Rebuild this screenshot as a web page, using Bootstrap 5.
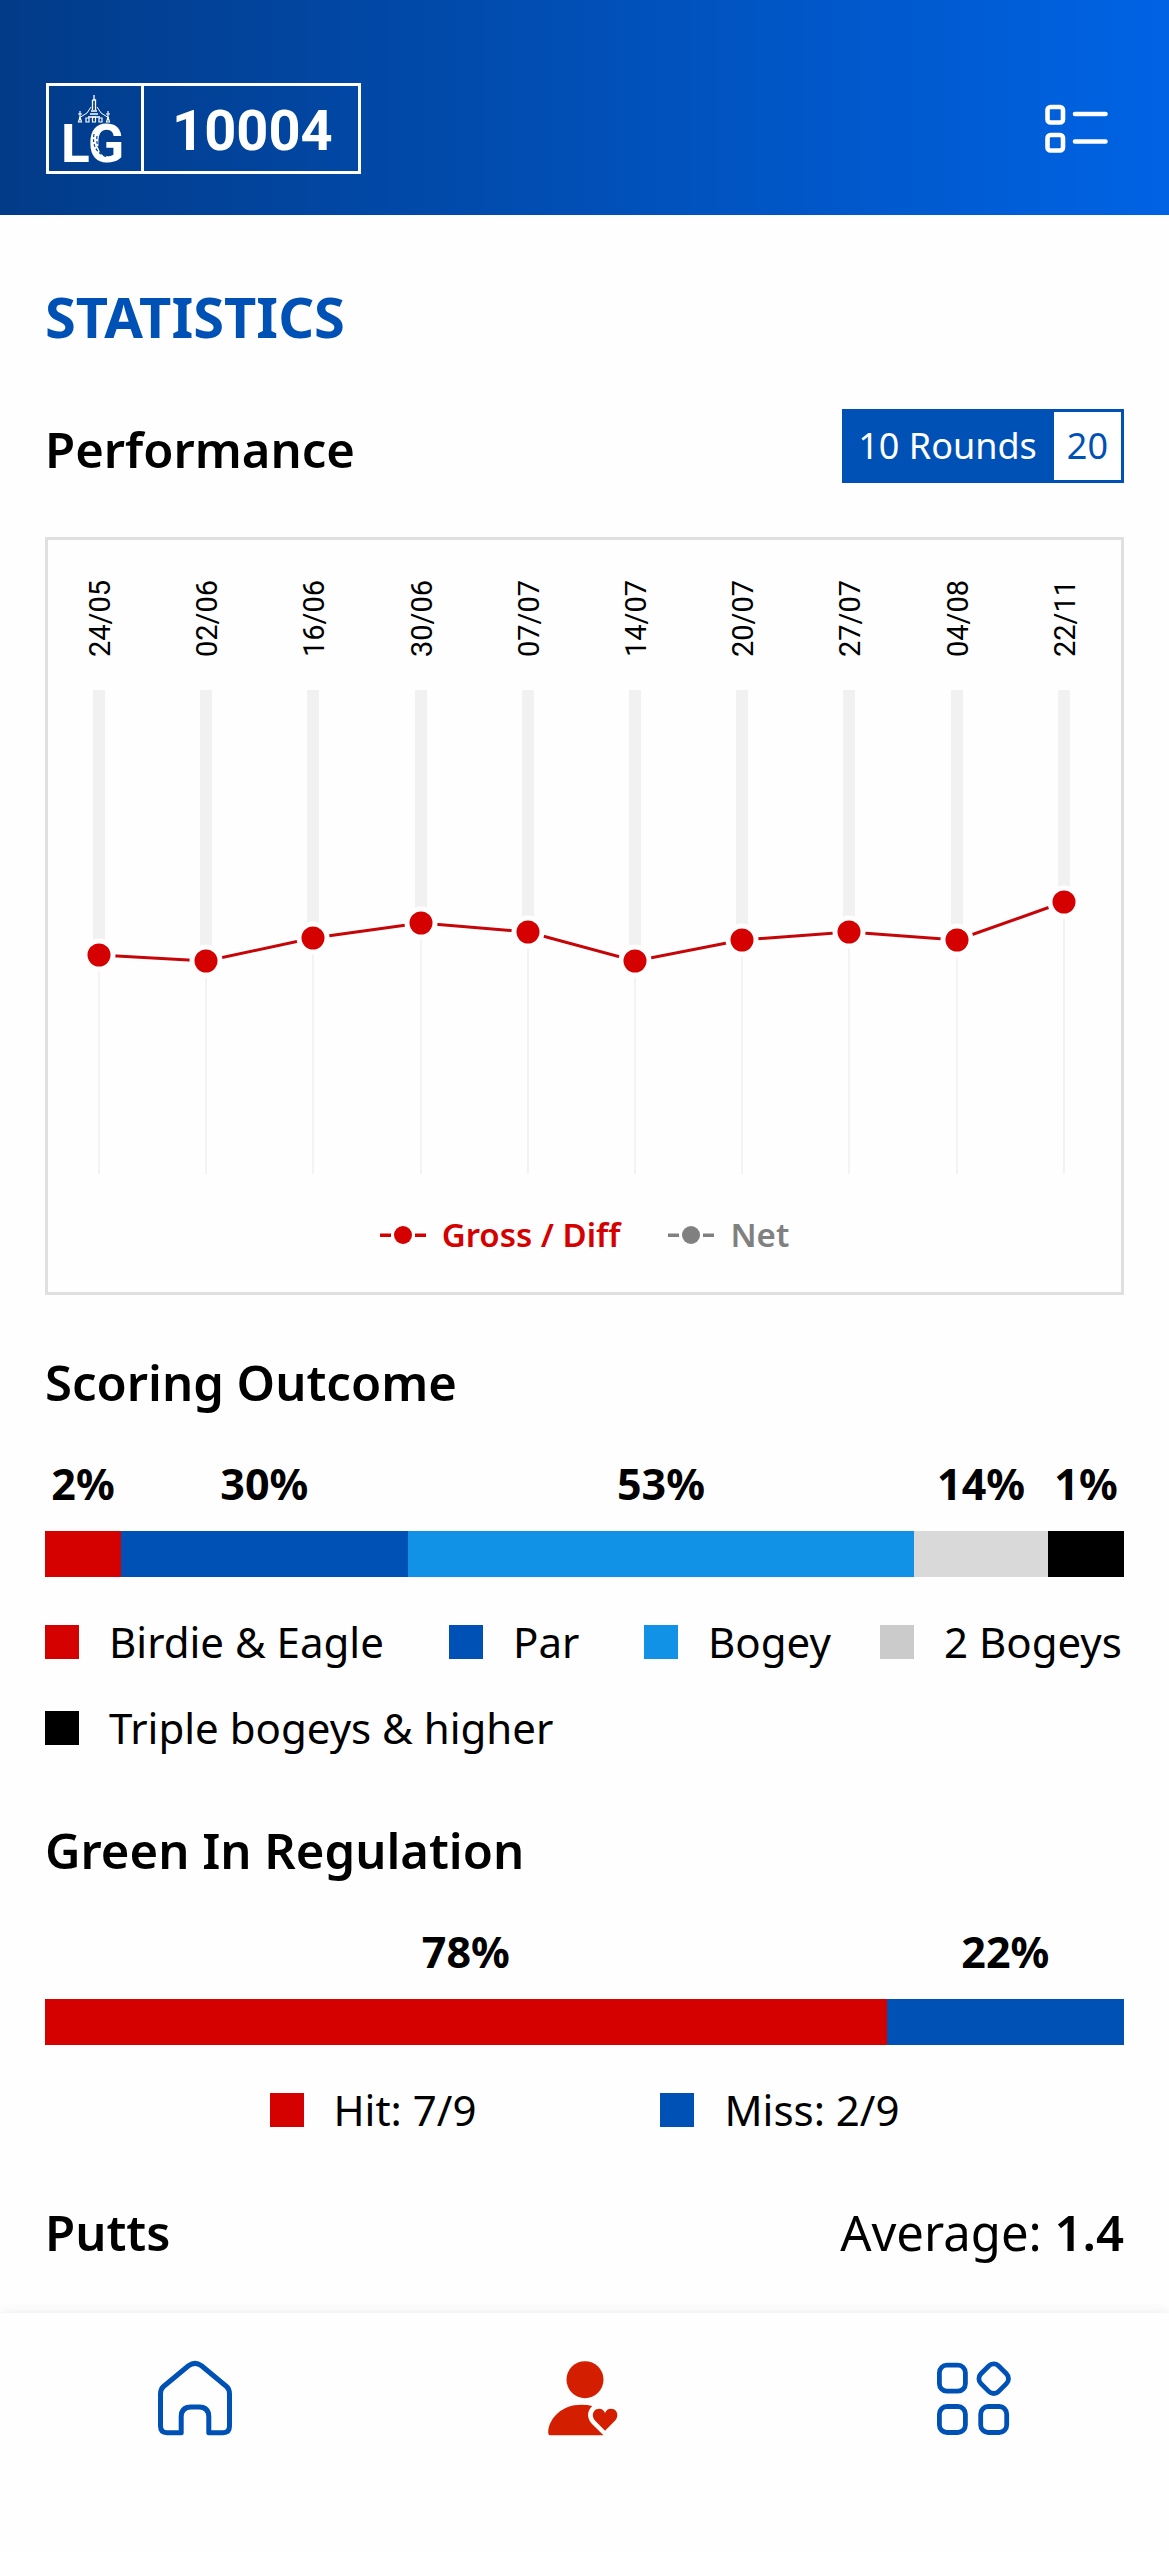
<!DOCTYPE html>
<html lang="en">
<head>
<meta charset="utf-8">
<meta name="viewport" content="width=device-width, initial-scale=1">
<title>Statistics</title>
<link rel="stylesheet" href="https://cdn.jsdelivr.net/npm/bootstrap@5.3.0/dist/css/bootstrap.min.css">
<style>
  :root { --blue: #0051b6; --red: #d50000; --sky: #1192e7; --silver: #d9d9d9; }
  body { font-family: "Noto Sans", "Open Sans", sans-serif; font-size: 42px; line-height: 64px; color: #000; background: #fefefe; padding-bottom: 240px; }
  .topbar { background: linear-gradient(90deg, #023b88 0%, #0063e4 100%); padding: 83px 45px 41px; }
  .club { border: 3px solid #fff; color: #fff; text-decoration: none; height: 91px; margin-left: 1px; }
  .club-logo { width: 95px; border-right: 3px solid #fff; }
  .club-logo svg { overflow: visible; }
  .club-code { font: 700 56px/64px Roboto, sans-serif; padding: 4px 25px 0 28px; }
  .list-btn { margin-right: 14px; }
  .content { padding: 69px 45px 48px; }
  .page-title { font-size: 56px; line-height: 64px; font-weight: 700; color: var(--blue); margin-bottom: 61px; }
  .sec-title, .average { font-size: 49px; line-height: 68px; }
  .sec-title, .fw-600 { font-weight: 600; }
  .rounds { border: 3px solid var(--blue); margin-bottom: 54px; }
  .perf-row .sec-title { margin-bottom: 54px; }
  .rounds .btn { font-size: 36px; line-height: 68px; border: 0; border-radius: 0; padding: 0 13px; color: var(--blue); background: #fff; }
  .rounds .btn.active { color: #fff; background: var(--blue); padding-right: 17px; }
  .chart-box { border: 3px solid #e0e0e0; padding-bottom: 35px; margin-bottom: 53px; }
  .chart-box text { font: 400 29px Roboto, sans-serif; }
  .chart-key { font-size: 33px; line-height: 44px; font-weight: 600; gap: 48px; margin-top: 33px; }
  .chart-key div { gap: 16px; }
  .key-red { color: var(--red); }
  .key-grey { color: #808080; }
  .outcome { margin-top: 36px; margin-bottom: 33px; }
  .outcome > div { flex: 1 1 0; min-width: 76px; text-align: center; font-weight: 700; font-size: 43px; }
  .outcome > div::after { content: ""; display: block; height: 46px; margin-top: 15px; background: var(--tone); }
  .legend-item { gap: 30px; white-space: nowrap; }
  .legend-item::before { content: ""; width: 34px; height: 34px; background: var(--tone); flex: none; }
  .t-red { --tone: var(--red); } .t-blue { --tone: var(--blue); } .t-sky { --tone: var(--sky); }
  .t-silver { --tone: var(--silver); } .t-grey { --tone: #cbcbcb; } .t-black { --tone: #000; }
  .score-key { display: grid; grid-template-columns: 404fr 195fr 236fr 244fr; row-gap: 22px; margin-bottom: 56px; }
  .score-key .wide { grid-column: 1 / -1; }
  .green-key { gap: 184px; margin-bottom: 56px; }
  .tabbar { background: #fefefe; height: 239px; padding-top: 45px; box-shadow: 0 0 12px rgba(0,0,0,.08); }
  svg { display: block; }
</style>
</head>
<body>
<header class="topbar d-flex justify-content-between align-items-center">
  <a href="#" class="club d-flex align-items-stretch">
    <span class="club-logo d-flex align-items-center justify-content-center">
      <svg width="76" height="85" viewBox="-5 -5 76 85" fill="none" stroke="#fff" aria-label="LG club logo">
        <path d="M32 4v5M30.500 9h3v10M30.500 9v10M29 20h6M28 23h8M26 26h12" stroke-width="1.300"/>
        <path d="M29 16L25 22L17 27M35 16L39 22L47 27" stroke-width="1"/>
        <path d="M18 20v6M46 20v6M16 23h4M44 23h4M16.500 31l1.500-5l1.500 5zM44.500 31l1.500-5l1.500 5zM24 27v4h3v-4zM30.500 26v5h3v-5zM37 27v4h3v-4z" stroke-width="1.200"/>
        <text x="-1" y="71" font-family="Roboto" font-weight="700" font-size="53" fill="#fff" stroke="none">LG</text>
        <path d="M32 43q-3 17 13 23M35 45q-2 14 12 20" stroke="#03408f" stroke-width="1.200" stroke-dasharray="3 2"/>
      </svg>
    </span>
    <span class="club-code d-flex align-items-center">10004</span>
  </a>
  <button type="button" class="btn border-0 p-0 list-btn" aria-label="Menu">
    <svg width="66" height="50" viewBox="0 0 66 50" fill="none" stroke="#fff" stroke-width="4.600" stroke-linecap="round">
      <rect x="3.500" y="3" width="15.500" height="15.500" rx="3"/>
      <rect x="3.500" y="31" width="15.500" height="15.500" rx="3"/>
      <path d="M31 10h30.500M31 37.500h30.500"/>
    </svg>
  </button>
</header>

<main class="content">
  <h1 class="page-title">STATISTICS</h1>

  <div class="perf-row d-flex justify-content-between align-items-end">
    <h2 class="sec-title">Performance</h2>
    <div class="rounds d-flex" role="group" aria-label="Number of rounds">
      <button type="button" class="btn active">10 Rounds</button>
      <button type="button" class="btn">20</button>
    </div>
  </div>

  <section class="chart-box">
    <svg id="chart" class="w-100 h-auto" viewBox="0 0 1073 640" role="img" aria-label="Score per round"></svg>
    <div class="chart-key d-flex justify-content-center">
      <div class="key-red d-flex align-items-center">
        <svg width="46" height="18" viewBox="0 0 46 18" fill="currentColor"><circle cx="23" cy="9" r="9"/><path d="M0 7.500h11v3.500H0zM35 7.500h11v3.500H35z"/></svg>
        <span>Gross / Diff</span>
      </div>
      <div class="key-grey d-flex align-items-center">
        <svg width="46" height="18" viewBox="0 0 46 18" fill="currentColor"><circle cx="23" cy="9" r="9"/><path d="M0 7.500h11v3.500H0zM35 7.500h11v3.500H35z"/></svg>
        <span>Net</span>
      </div>
    </div>
  </section>

  <section>
    <h2 class="sec-title mb-0">Scoring Outcome</h2>
    <div class="outcome d-flex">
      <div class="t-red" style="flex-grow:2">2%</div>
      <div class="t-blue" style="flex-grow:30">30%</div>
      <div class="t-sky" style="flex-grow:53">53%</div>
      <div class="t-silver" style="flex-grow:14">14%</div>
      <div class="t-black" style="flex-grow:1">1%</div>
    </div>
    <div class="score-key">
      <div class="legend-item d-flex align-items-center t-red">Birdie &amp; Eagle</div>
      <div class="legend-item d-flex align-items-center t-blue">Par</div>
      <div class="legend-item d-flex align-items-center t-sky">Bogey</div>
      <div class="legend-item d-flex align-items-center t-grey">2 Bogeys</div>
      <div class="legend-item d-flex align-items-center t-black wide">Triple bogeys &amp; higher</div>
    </div>
  </section>

  <section>
    <h2 class="sec-title mb-0">Green In Regulation</h2>
    <div class="outcome d-flex">
      <div class="t-red" style="flex-grow:78">78%</div>
      <div class="t-blue" style="flex-grow:22">22%</div>
    </div>
    <div class="green-key d-flex justify-content-center">
      <div class="legend-item d-flex align-items-center t-red">Hit: 7/9</div>
      <div class="legend-item d-flex align-items-center t-blue">Miss: 2/9</div>
    </div>
  </section>

  <section class="d-flex justify-content-between">
    <h2 class="sec-title mb-0">Putts</h2>
    <div class="average">Average: <span class="fw-600">1.4</span></div>
  </section>
</main>

<nav class="tabbar fixed-bottom" aria-label="Main">
  <div class="row g-0">
    <a href="#" class="col d-flex justify-content-center" aria-label="Home">
      <svg width="80" height="80" viewBox="0 0 80 80" fill="none" stroke="#0051b6" stroke-width="5" stroke-linejoin="round">
        <path d="M8.500 28.500L33.500 7.800Q40 3 46.500 7.800L71.500 28.500Q74.500 31 74.500 36V68Q74.500 74.700 68 74.700H53.800V59Q53.800 49 44 49H36Q26.200 49 26.200 59V74.700H12Q5.500 74.700 5.500 68V36Q5.500 31 8.500 28.500Z"/>
      </svg>
    </a>
    <a href="#" class="col d-flex justify-content-center" aria-label="Profile">
      <svg width="80" height="80" viewBox="0 0 80 80" fill="#d41e00">
        <circle cx="40" cy="21.700" r="18.500"/>
        <path d="M5 77.200Q3.200 77.200 3.200 74C4 60 17 46.700 36 46.700Q43 46.700 47.200 48C42 53 41.500 60 47 66L58.500 77.200Z"/>
        <path d="M60 72.700L50 62.500C46.500 58.500 47.600 53 51.500 51.200C55 49.800 58.500 51 60 55C61.500 51 65 49.800 68.800 51.200C72.600 53 73.800 58.500 70.200 62.500Z"/>
      </svg>
    </a>
    <a href="#" class="col d-flex justify-content-center" aria-label="More">
      <svg width="80" height="80" viewBox="0 0 80 80" fill="none" stroke="#0051b6" stroke-width="4.800">
        <rect x="5.400" y="7.200" width="26" height="26" rx="7.500"/>
        <rect x="47.200" y="8.200" width="25" height="25" rx="7" transform="rotate(45 59.700 20.700)"/>
        <rect x="5.400" y="48.500" width="26" height="26" rx="7.500"/>
        <rect x="46.700" y="48.500" width="26" height="26" rx="7.500"/>
      </svg>
    </a>
  </div>
</nav>

<script src="https://cdn.jsdelivr.net/npm/bootstrap@5.3.0/dist/js/bootstrap.bundle.min.js"></script>
<script>
  const rounds = [["24/05", 415], ["02/06", 421], ["16/06", 398], ["30/06", 383], ["07/07", 392],
                  ["14/07", 421], ["20/07", 400], ["27/07", 392], ["04/08", 400], ["22/11", 362]];
  const x = i => Math.round(51 + i * 107.2);
  let bars = "", dots = "";
  rounds.forEach(([date, y], i) => {
    const cx = x(i);
    bars += `<text transform="translate(${cx + 11} 117) rotate(-90)">${date}</text>
      <rect x="${cx - 6}" y="150" width="12" height="${y - 150}" fill="#f1f1f1"/>
      <rect x="${cx - 1}" y="${y}" width="2" height="${634 - y}" fill="#f3f3f6"/>`;
    dots += `<circle cx="${cx}" cy="${y}" r="14" fill="#d50000" stroke="#fefefe" stroke-width="5"/>`;
  });
  const line = rounds.map(([, y], i) => `${x(i)},${y}`).join(" ");
  document.getElementById("chart").innerHTML =
    bars + `<polyline points="${line}" fill="none" stroke="#c60508" stroke-width="3"/>` + dots;
</script>
</body>
</html>
